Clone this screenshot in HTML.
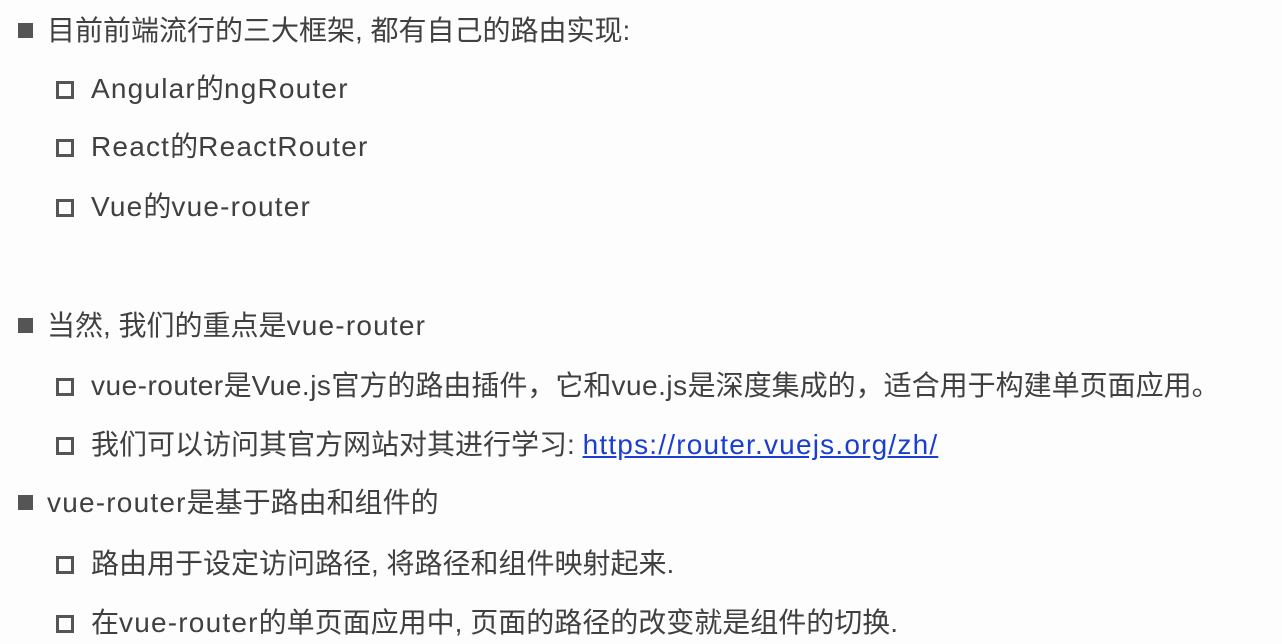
<!DOCTYPE html>
<html><head><meta charset="utf-8"><style>
body{margin:0;width:1282px;height:644px;background:#fdfdfd;overflow:hidden;position:relative;font-family:"Liberation Sans","Noto Sans CJK SC",sans-serif;color:#404040;}
.l{position:absolute;font-size:28px;line-height:30px;white-space:nowrap;}
.e{letter-spacing:1.2px;}
.f{letter-spacing:0.5px;}
.b1{position:absolute;width:15px;height:15px;background:#555;}
.b2{position:absolute;width:12px;height:12px;border:3px solid #555;}
a{color:#1a3fd0;text-decoration:underline;}
</style></head><body>
<div class="b1" style="left:18px;top:23px"></div><div class="l" style="left:47px;top:16px">目前前端流行的三大框架, 都有自己的路由实现:</div>
<div class="b2" style="left:56px;top:81px"></div><div class="l" style="left:91px;top:74px"><span class="e">Angular</span>的<span class="e">ngRouter</span></div>
<div class="b2" style="left:56px;top:139px"></div><div class="l" style="left:91px;top:132px"><span class="e">React</span>的<span class="e">ReactRouter</span></div>
<div class="b2" style="left:56px;top:199px"></div><div class="l" style="left:91px;top:192px"><span class="e">Vue</span>的<span class="e">vue-router</span></div>
<div class="b1" style="left:18px;top:318px"></div><div class="l" style="left:47px;top:311px">当然, 我们的重点是<span class="e">vue-router</span></div>
<div class="b2" style="left:56px;top:378px"></div><div class="l" style="left:91px;top:371px"><span class="f">vue-router</span>是<span class="f">Vue.js</span>官方的路由插件，它和<span class="f">vue.js</span>是深度集成的，适合用于构建单页面应用。</div>
<div class="b2" style="left:56px;top:437px"></div><div class="l" style="left:91px;top:430px">我们可以访问其官方网站对其进行学习: <a class="e">https://router.vuejs.org/zh/</a></div>
<div class="b1" style="left:18px;top:495px"></div><div class="l" style="left:47px;top:488px"><span class="e">vue-router</span>是基于路由和组件的</div>
<div class="b2" style="left:56px;top:556px"></div><div class="l" style="left:91px;top:549px">路由用于设定访问路径, 将路径和组件映射起来.</div>
<div class="b2" style="left:56px;top:615px"></div><div class="l" style="left:91px;top:608px">在<span class="e">vue-router</span>的单页面应用中, 页面的路径的改变就是组件的切换.</div>
</body></html>
